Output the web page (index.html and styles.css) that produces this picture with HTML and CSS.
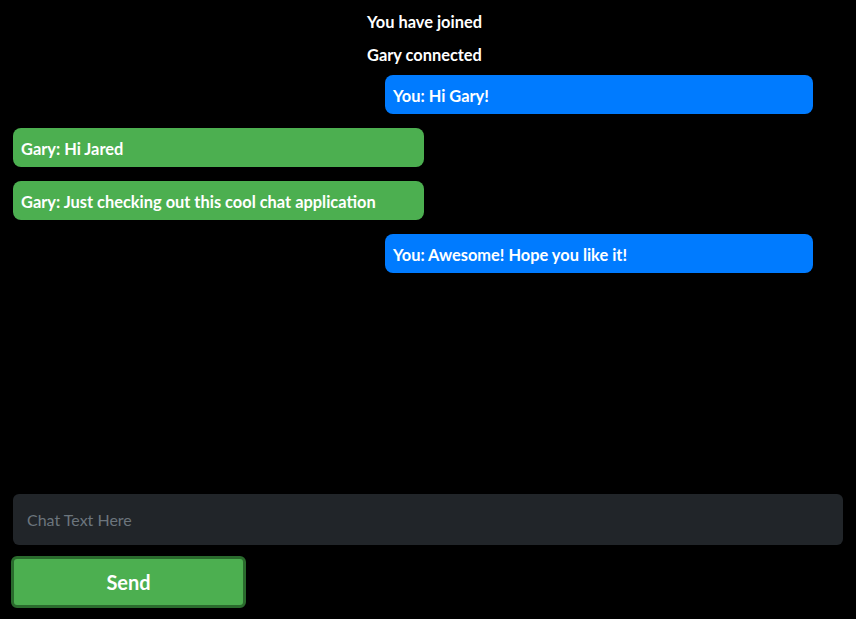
FILE: index.html
```html
<!DOCTYPE html>
<html>
<head>
<meta charset="utf-8">
<link rel="stylesheet" href="styles.css">
</head>
<body>
<div class="app">
  <div class="messages">
    <div class="status">You have joined</div>
    <div class="status">Gary connected</div>
    <div class="bubble mine">You: Hi Gary!</div>
    <div class="bubble theirs">Gary: Hi Jared</div>
    <div class="bubble theirs">Gary: Just checking out this cool chat application</div>
    <div class="bubble mine">You: Awesome! Hope you like it!</div>
  </div>
  <div class="composer">
    <input class="chat-input" type="text" placeholder="Chat Text Here">
    <button class="send">Send</button>
  </div>
</div>
</body>
</html>
```
FILE: styles.css
```css
html, body {
  margin: 0;
  padding: 0;
  background: #000;
  height: 100%;
}
body {
  font-family: "Lato", "Open Sans", sans-serif;
  color: #fff;
}
.app {
  height: 619px;
  display: flex;
  flex-direction: column;
  justify-content: space-between;
  padding: 0 13px;
  box-sizing: border-box;
}
.messages {
  display: flex;
  flex-direction: column;
  padding-top: 12px;
}
.status {
  font-weight: 700;
  font-size: 16.4px;
  line-height: 20px;
  margin-left: 354px;
  margin-bottom: 13px;
}
.status + .status {
  margin-bottom: 10px;
}
.bubble {
  height: 39px;
  box-sizing: border-box;
  display: flex;
  align-items: center;
  padding: 2px 8px 0;
  border-radius: 8px;
  font-weight: 700;
  font-size: 16.4px;
  margin-bottom: 14px;
}
.mine {
  background: #007bff;
  width: 428px;
  margin-left: 372px;
}
.theirs {
  background: #4caf50;
  width: 411px;
}
.composer {
  display: flex;
  flex-direction: column;
  align-items: flex-start;
  padding-bottom: 11px;
}
.chat-input {
  width: 100%;
  height: 51px;
  box-sizing: border-box;
  background: #212529;
  border: none;
  border-radius: 6px;
  padding: 0 14px;
  font-family: "Lato", "Open Sans", sans-serif;
  font-size: 16px;
  color: #fff;
  outline: none;
  margin-bottom: 11px;
}
.chat-input::placeholder {
  color: #6c757d;
}
.send {
  width: 235px;
  height: 52px;
  margin-left: -2px;
  box-sizing: border-box;
  background: #4caf50;
  border: 3px solid #2a6b2d;
  border-radius: 6px;
  color: #fff;
  font-family: "Lato", "Open Sans", sans-serif;
  font-weight: 700;
  font-size: 20px;
}
```
